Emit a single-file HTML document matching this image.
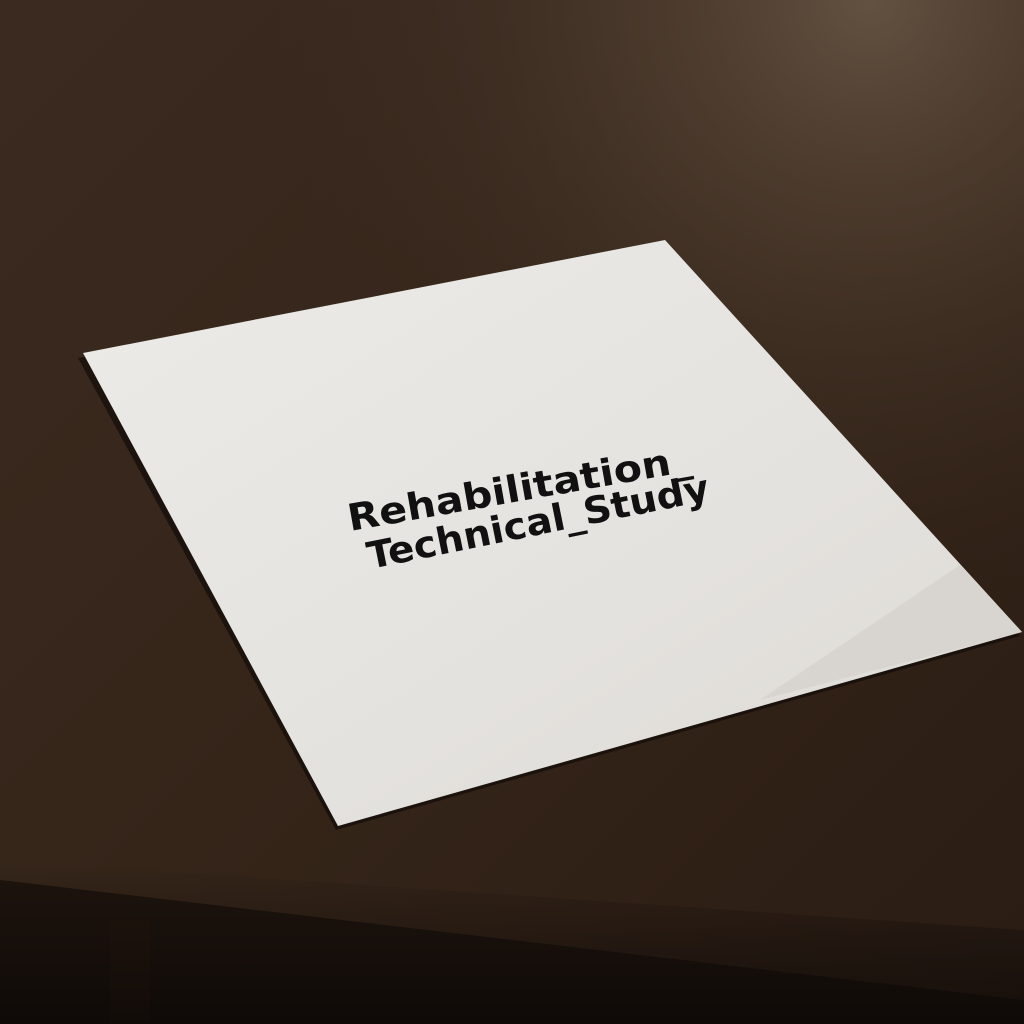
<!DOCTYPE html>
<html><head><meta charset="utf-8"><style>
html,body{margin:0;padding:0;width:1024px;height:1024px;overflow:hidden;background:#2e2018}
</style></head><body>
<svg width="1024" height="1024" viewBox="0 0 1024 1024" xmlns="http://www.w3.org/2000/svg">
<defs>
<linearGradient id="bg" x1="0" y1="0" x2="1" y2="1">
<stop offset="0" stop-color="#3a2a20"/>
<stop offset="0.5" stop-color="#352519"/>
<stop offset="1" stop-color="#2a1c14"/>
</linearGradient>
<radialGradient id="glow" cx="0.85" cy="0" r="0.6">
<stop offset="0" stop-color="#6e5c4a" stop-opacity="0.8"/>
<stop offset="1" stop-color="#3a2a20" stop-opacity="0"/>
</radialGradient>
<linearGradient id="paper" x1="0" y1="0" x2="1" y2="1">
<stop offset="0" stop-color="#ecebe7"/>
<stop offset="0.6" stop-color="#e4e2de"/>
<stop offset="1" stop-color="#dcd9d4"/>
</linearGradient>
<linearGradient id="edge" x1="0" y1="0" x2="0" y2="1">
<stop offset="0" stop-color="#000" stop-opacity="0"/>
<stop offset="1" stop-color="#000" stop-opacity="0.5"/>
</linearGradient>
</defs>
<rect width="1024" height="1024" fill="url(#bg)"/>
<rect width="1024" height="1024" fill="url(#glow)"/>
<polygon points="0,880 1024,1000 1024,1024 0,1024" fill="#1e140e"/>
<rect x="110" y="920" width="40" height="104" fill="#22160f"/>
<polygon points="0,860 1024,930 1024,1024 0,1024" fill="url(#edge)"/>
<polygon points="78,358 660,245 1020,636 336,830" fill="#120c08" opacity="0.7"/>
<polygon points="83,353 665,240 1022,632 338,826" fill="url(#paper)"/>
<polygon points="960,565 1022,632 760,700" fill="#cfccc7" opacity="0.5"/>
<g font-family="DejaVu Sans Condensed, DejaVu Sans, sans-serif" font-weight="bold" font-size="37" fill="#111">
<text x="350" y="531" textLength="348" lengthAdjust="spacingAndGlyphs" transform="rotate(-10 350 531)">Rehabilitation_</text>
<text x="370" y="569" textLength="348" lengthAdjust="spacingAndGlyphs" transform="rotate(-11.5 370 569)">Technical_Study</text>
</g>
</svg>
</body></html>
